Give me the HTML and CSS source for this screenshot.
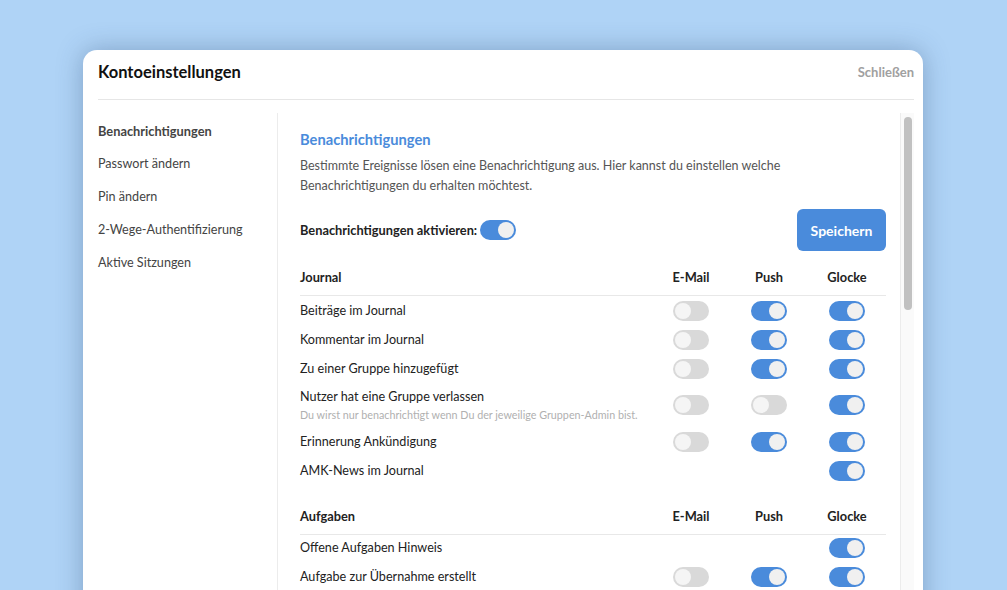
FILE: index.html
```html
<!DOCTYPE html>
<html lang="de">
<head>
    <meta charset="UTF-8">
    <meta name="viewport" content="width=device-width, initial-scale=1.0">
    <title>Kontoeinstellungen</title>
    <link rel="stylesheet" href="styles.css">
</head>
<body>
    <div class="modal">
        <div class="modal-header">
            <h2>Kontoeinstellungen</h2>
            <a class="schliessen" href="#">Schließen</a>
        </div>

        <div class="modal-body">
            <ul class="menu">
                <li class="aktiv">Benachrichtigungen</li>
                <li>Passwort ändern</li>
                <li>Pin ändern</li>
                <li>2-Wege-Authentifizierung</li>
                <li>Aktive Sitzungen</li>
            </ul>

            <div class="inhalt">
                <h3>Benachrichtigungen</h3>
                <p class="beschreibung">Bestimmte Ereignisse lösen eine Benachrichtigung aus. Hier kannst du einstellen welche Benachrichtigungen du erhalten möchtest.</p>

                <div class="aktivieren">
                    <label>Benachrichtigungen aktivieren: <span class="toggle an"></span></label>
                    <button>Speichern</button>
                </div>

                <div class="gruppe">
                    <div class="zeile kopf">
                        <span class="titel">Journal</span>
                        <span>E-Mail</span>
                        <span>Push</span>
                        <span>Glocke</span>
                    </div>
                    <div class="zeile">
                        <span class="titel">Beiträge im Journal</span>
                        <span><i class="toggle"></i></span>
                        <span><i class="toggle an"></i></span>
                        <span><i class="toggle an"></i></span>
                    </div>
                    <div class="zeile">
                        <span class="titel">Kommentar im Journal</span>
                        <span><i class="toggle"></i></span>
                        <span><i class="toggle an"></i></span>
                        <span><i class="toggle an"></i></span>
                    </div>
                    <div class="zeile">
                        <span class="titel">Zu einer Gruppe hinzugefügt</span>
                        <span><i class="toggle"></i></span>
                        <span><i class="toggle an"></i></span>
                        <span><i class="toggle an"></i></span>
                    </div>
                    <div class="zeile hoch">
                        <span class="titel">Nutzer hat eine Gruppe verlassen
                            <small>Du wirst nur benachrichtigt wenn Du der jeweilige Gruppen-Admin bist.</small>
                        </span>
                        <span><i class="toggle"></i></span>
                        <span><i class="toggle"></i></span>
                        <span><i class="toggle an"></i></span>
                    </div>
                    <div class="zeile">
                        <span class="titel">Erinnerung Ankündigung</span>
                        <span><i class="toggle"></i></span>
                        <span><i class="toggle an"></i></span>
                        <span><i class="toggle an"></i></span>
                    </div>
                    <div class="zeile">
                        <span class="titel">AMK-News im Journal</span>
                        <span></span>
                        <span></span>
                        <span><i class="toggle an"></i></span>
                    </div>
                </div>

                <div class="gruppe">
                    <div class="zeile kopf">
                        <span class="titel">Aufgaben</span>
                        <span>E-Mail</span>
                        <span>Push</span>
                        <span>Glocke</span>
                    </div>
                    <div class="zeile">
                        <span class="titel">Offene Aufgaben Hinweis</span>
                        <span></span>
                        <span></span>
                        <span><i class="toggle an"></i></span>
                    </div>
                    <div class="zeile">
                        <span class="titel">Aufgabe zur Übernahme erstellt</span>
                        <span><i class="toggle"></i></span>
                        <span><i class="toggle an"></i></span>
                        <span><i class="toggle an"></i></span>
                    </div>
                </div>
            </div>

            <div class="scrollleiste">
                <div class="daumen"></div>
            </div>
        </div>
    </div>
</body>
</html>
```

FILE: styles.css
```css
html, body {
    margin: 0;
    height: 590px;
    overflow: hidden;
}
body {
    font-family: Lato, "Noto Sans", Arial, sans-serif;
    background-color: #afd3f6;
    padding-top: 50px;
    box-sizing: border-box;
}
.modal {
    width: 840px;
    height: 620px;
    margin-left: 83px;
    background-color: white;
    border-radius: 14px;
    box-shadow: 0 0 26px rgba(40, 70, 110, 0.35);
    padding: 0 9px 0 15px;
    box-sizing: border-box;
    display: flex;
    flex-direction: column;
}
.modal-header {
    display: flex;
    justify-content: space-between;
    align-items: center;
    height: 44px;
    border-bottom: 1px solid #e6e6e6;
    padding-bottom: 5px;
}
.modal-header h2 {
    margin: 0;
    font-size: 16.5px;
    line-height: 22px;
    font-weight: bold;
    color: #111;
}
.schliessen {
    font-size: 13px;
    font-weight: bold;
    color: #a0a0a0;
    text-decoration: none;
}
.modal-body {
    flex: 1;
    display: flex;
    padding-top: 13px;
    min-height: 0;
}
.menu {
    list-style: none;
    margin: 0;
    padding: 9px 0 0 0;
    width: 179px;
    border-right: 1px solid #ececec;
    font-size: 12.6px;
    color: #444;
}
.menu li {
    height: 18px;
    line-height: 18px;
    margin-bottom: 15px;
}
.menu li.aktiv {
    font-weight: bold;
    font-size: 12.8px;
}
.inhalt {
    flex: 1;
    overflow: hidden;
    padding: 16px 14px 0 22px;
}
.inhalt h3 {
    margin: 0;
    font-size: 14.7px;
    line-height: 20px;
    font-weight: bold;
    color: #4a8bdb;
}
.beschreibung {
    margin: 7px 0 0 0;
    font-size: 12.5px;
    line-height: 20px;
    color: #555;
    max-width: 520px;
}
.aktivieren {
    display: flex;
    justify-content: space-between;
    align-items: center;
    margin-top: 13px;
}
.aktivieren label {
    display: flex;
    align-items: center;
    gap: 3px;
    font-size: 12.8px;
    font-weight: bold;
    color: #222;
}
button {
    width: 89px;
    height: 42px;
    border: none;
    border-radius: 6px;
    background-color: #4a8bdb;
    color: white;
    font-family: inherit;
    font-size: 14px;
    font-weight: bold;
    cursor: pointer;
}
.gruppe {
    margin-top: 17px;
}
.gruppe + .gruppe {
    margin-top: 22px;
}
.zeile {
    display: grid;
    grid-template-columns: 1fr 78px 78px 78px;
    align-items: center;
    min-height: 29px;
    font-size: 12.6px;
    color: #222;
}
.zeile > span {
    display: flex;
    justify-content: center;
}
.zeile > span.titel {
    display: block;
    text-align: left;
    line-height: 18px;
}
.zeile.kopf {
    min-height: 0;
    line-height: 18px;
    padding-bottom: 9px;
    border-bottom: 1px solid #e8e8e8;
    font-weight: bold;
    font-size: 12.8px;
}
.gruppe + .gruppe .zeile.kopf {
    margin-bottom: -2px;
}
.zeile.hoch {
    min-height: 44px;
}
.zeile small {
    display: block;
    font-size: 10.75px;
    line-height: 14px;
    margin-top: 2px;
    color: #b0b0b0;
}
.toggle {
    display: inline-block;
    position: relative;
    width: 36px;
    height: 20px;
    border-radius: 10px;
    background-color: #d9d9d9;
}
.toggle::after {
    content: "";
    position: absolute;
    top: 2px;
    left: 2px;
    width: 16px;
    height: 16px;
    border-radius: 50%;
    background-color: #f5f5f5;
}
.toggle.an {
    background-color: #4a8bdb;
}
.toggle.an::after {
    left: 18px;
    background-color: #f0f0f0;
}
.scrollleiste {
    width: 14px;
    border-left: 1px solid #ececec;
    background-color: #fafafa;
    box-sizing: border-box;
    padding: 4px 2px 0 3px;
}
.daumen {
    height: 193px;
    border-radius: 4px;
    background-color: #c1c1c1;
}
```
